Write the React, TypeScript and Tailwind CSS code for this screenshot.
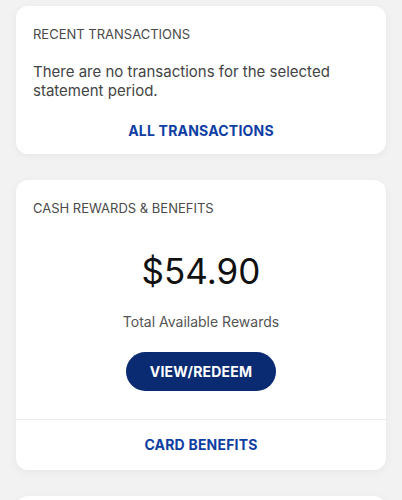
export default function App() {
  return (
    <div className="bg-[#f2f2f2] px-4 pt-[6px] font-['Inter','Liberation_Sans',sans-serif] overflow-hidden h-[500px]">
      <div className="bg-white rounded-[12px] shadow-[0_2px_8px_rgba(0,0,0,0.05)] px-[17px] pt-[20px] pb-[14px]">
        <p className="text-[13px] leading-[16px] text-[#4a4a4a]">RECENT TRANSACTIONS</p>
        <p className="mt-[20px] text-[15px] leading-[19px] text-[#444]">
          There are no transactions for the selected statement period.
        </p>
        <p className="mt-[22px] text-center text-[14px] leading-[18px] font-bold text-[#0f3ea3] tracking-[0.2px]">ALL TRANSACTIONS</p>
      </div>

      <div className="mt-[26px] bg-white rounded-[12px] shadow-[0_2px_8px_rgba(0,0,0,0.05)]">
        <div className="px-[17px] pt-[20px] pb-[28px]">
          <p className="text-[13px] leading-[16px] text-[#4a4a4a]">CASH REWARDS &amp; BENEFITS</p>
          <p className="mt-[34px] text-center text-[35px] leading-[42px] text-[#111]">$54.90</p>
          <p className="mt-[21px] text-center text-[14px] leading-[18px] text-[#555]">Total Available Rewards</p>
          <div className="mt-[21px] flex justify-center">
            <button className="w-[150px] h-[39px] rounded-full bg-[#0a2a72] text-white text-[14px] font-bold tracking-[0.2px]">VIEW/REDEEM</button>
          </div>
        </div>
        <div className="border-t border-[#ececec] pt-[16px] pb-[16px]">
          <p className="text-center text-[14px] leading-[18px] font-bold text-[#0f3ea3] tracking-[0.2px]">CARD BENEFITS</p>
        </div>
      </div>

      <div className="mt-[26px] bg-white rounded-[12px] h-[60px] shadow-[0_2px_8px_rgba(0,0,0,0.05)]" />
    </div>
  );
}
